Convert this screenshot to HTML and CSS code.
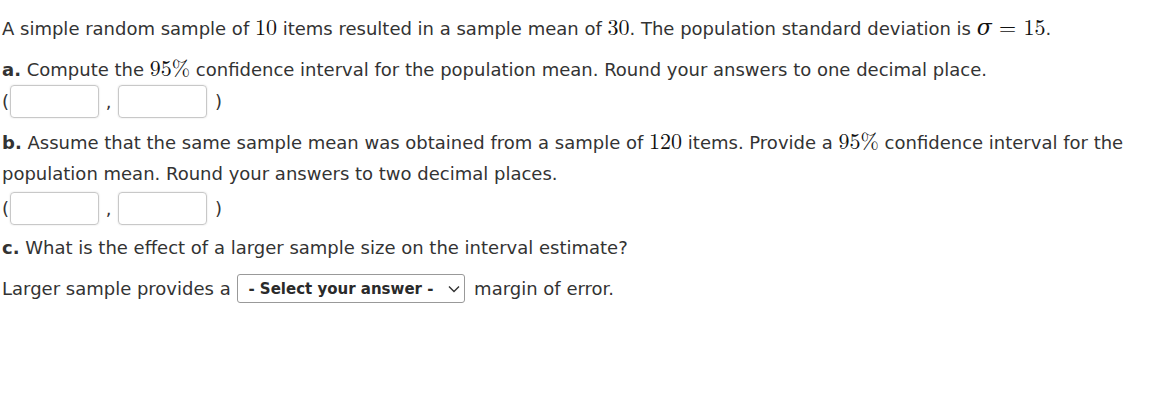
FILE: index.html
```html
<!DOCTYPE html>
<html>
<head>
<meta charset="utf-8">
<link rel="stylesheet" href="styles.css">
</head>
<body>
<div class="page">
  <p class="line first">A simple random sample of <span class="m">10</span> items resulted in a sample mean of <span class="m">30</span>. The population standard deviation is <span class="m"><i>σ</i> = 15</span>.</p>
  <p class="line"><b>a.</b> Compute the <span class="m">95%</span> confidence interval for the population mean. Round your answers to one decimal place.</p>
  <div class="interval int-a">
    <span class="paren">(</span><span class="box"></span><span class="comma">,</span><span class="box"></span><span class="paren close">)</span>
  </div>
  <p class="line"><b>b.</b> Assume that the same sample mean was obtained from a sample of <span class="m">120</span> items. Provide a <span class="m">95%</span> confidence interval for the<br>population mean. Round your answers to two decimal places.</p>
  <div class="interval int-b">
    <span class="paren">(</span><span class="box"></span><span class="comma">,</span><span class="box"></span><span class="paren close">)</span>
  </div>
  <p class="line after-b"><b>c.</b> What is the effect of a larger sample size on the interval estimate?</p>
  <p class="line sel-line">Larger sample provides a <span class="select"><span class="sel-text">- Select your answer -</span><svg class="chev" width="12" height="8" viewBox="0 0 12 8"><path d="M1 1.5 L6 6.5 L11 1.5" fill="none" stroke="#333" stroke-width="1.4"/></svg></span> margin of error.</p>
</div>
</body>
</html>
```
FILE: styles.css
```css
html, body {
  margin: 0;
  padding: 0;
  background: #fff;
}
.page {
  padding: 0 2px;
  font-family: "DejaVu Sans", Verdana, sans-serif;
  font-size: 18px;
  color: #333;
}
.line {
  margin: 0;
  line-height: 31px;
}
.line.first {
  margin-top: 13px;
}
.line + .line { margin-top: 10px; }
.m {
  font-family: "Latin Modern Roman", "DejaVu Serif", "Liberation Serif", serif;
  font-size: 22px;
  line-height: 0;
  color: #111;
}
.m i { font-style: italic; }
b { font-weight: bold; color: #333; }
.interval {
  display: flex;
  align-items: center;
  height: 33px;
  margin-bottom: 9px;
}
.int-a { margin-top: 0; }
.int-b { margin-top: 3px; }
.after-b { margin-top: -2px; }
.paren { width: 8px; }
.box {
  display: inline-block;
  box-sizing: border-box;
  width: 89px;
  height: 33px;
  border: 1px solid #c8c8c8;
  border-radius: 4px;
  box-shadow: 0 0 2px #ddd;
}
.comma { width: 19px; text-align: center; }
.close { margin-left: 8px; }
.sel-line { display: flex; align-items: center; white-space: pre; }
.select {
  display: inline-flex;
  align-items: center;
  justify-content: space-between;
  box-sizing: border-box;
  width: 228px;
  height: 29px;
  margin: 0 3px 0 1px;
  padding: 1px 4px 0 10px;
  border: 1px solid #999;
  border-radius: 3px;
}
.sel-text {
  font-family: "DejaVu Sans", Tahoma, sans-serif;
  font-weight: bold;
  font-size: 15px;
  color: #2a2a2a;
}
```
